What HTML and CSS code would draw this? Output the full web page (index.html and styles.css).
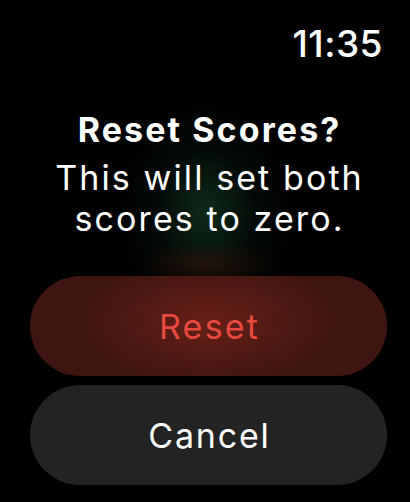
FILE: index.html
```html
<!DOCTYPE html>
<html>
<head>
<meta charset="utf-8">
<link rel="stylesheet" href="styles.css">
</head>
<body>
<div class="screen">
  <div class="status"><span class="time">11:35</span></div>
  <div class="alert">
    <div class="title">Reset Scores?</div>
    <div class="message">This will set both<br>scores to zero.</div>
  </div>
  <div class="actions">
    <button class="btn btn-destructive">Reset</button>
    <button class="btn btn-cancel">Cancel</button>
  </div>
</div>
</body>
</html>
```

FILE: styles.css
```css
html, body {
  margin: 0;
  padding: 0;
  background: #000;
}
.screen {
  width: 410px;
  height: 502px;
  box-sizing: border-box;
  overflow: hidden;
  font-family: Inter, "Noto Sans", sans-serif;
  color: #fff;
  display: flex;
  flex-direction: column;
  padding: 0 23px 0 30px;
  background:
    radial-gradient(ellipse 70px 22px at 206px 264px, rgba(90, 24, 16, 0.35), rgba(0,0,0,0) 100%),
    radial-gradient(ellipse 90px 115px at 206px 212px, rgba(16, 50, 31, 0.85), rgba(8, 24, 14, 0.4) 55%, rgba(0,0,0,0) 100%),
    #000;
}
.status {
  display: flex;
  justify-content: flex-end;
  padding-top: 22px;
  padding-right: 4px;
  height: 86px;
  box-sizing: border-box;
}
.time {
  font-size: 37px;
  line-height: 44px;
  font-weight: 500;
  letter-spacing: 0.5px;
}
.alert {
  text-align: center;
  font-size: 34px;
}
.title {
  font-weight: 700;
  line-height: 41px;
  margin-top: 23px;
  letter-spacing: 2.1px;
  padding-left: 2.1px;
}
.message {
  line-height: 41px;
  font-weight: 400;
  margin-top: 7px;
  letter-spacing: 2.1px;
  padding-left: 2.1px;
}
.actions {
  display: flex;
  flex-direction: column;
  gap: 9px;
  margin-top: 37px;
}
.btn {
  height: 100px;
  border: none;
  border-radius: 50px;
  font-family: inherit;
  font-size: 34px;
  letter-spacing: 2.2px;
  padding: 0 0 0 2.2px;
  margin: 0;
}
.btn-destructive {
  color: #e6493f;
  background:
    radial-gradient(ellipse 130px 65px at 50% 45%, rgba(108, 32, 24, 0.9), rgba(70, 20, 16, 0) 100%),
    #3e1511;
}
.btn-cancel {
  color: #fff;
  background: #232323;
  letter-spacing: 1.8px;
  padding-left: 1.8px;
}
```
